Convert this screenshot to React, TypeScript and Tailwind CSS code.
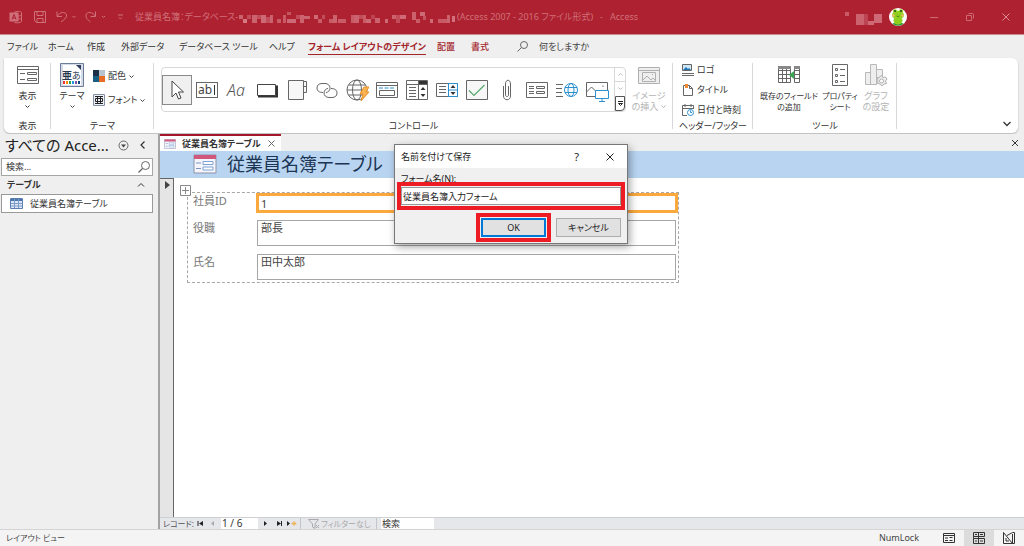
import React from 'react';

interface SvgIconProps {
  children: React.ReactNode;
  size?: string;
  viewBox?: string;
}

const SvgIcon: React.FC<SvgIconProps> = ({ children, size = 'w-6 h-6', viewBox = '0 0 24 24' }) => (
  <svg className={`${size} shrink-0`} viewBox={viewBox} fill="none" stroke="#666" strokeWidth={1} aria-hidden="true">
    {children}
  </svg>
);

const Chevron: React.FC<{ className?: string }> = ({ className = 'text-[#444]' }) => (
  <svg className={`w-[5px] h-[5px] shrink-0 ${className}`} viewBox="0 0 5 5" fill="none" stroke="currentColor" aria-hidden="true">
    <path d="M.5 1.5l2 2 2-2" />
  </svg>
);

const menuItems = [
  { label: 'ファイル', width: 'w-[41px]' },
  { label: 'ホーム', width: 'w-[39px]' },
  { label: '作成', width: 'w-[34px]' },
  { label: '外部データ', width: 'w-[58px]' },
  { label: 'データベース ツール', width: 'w-[90px]' },
  { label: 'ヘルプ', width: 'w-[39px]' },
];

// Hidden part of the file path, as [x, y, width, height, opacity]
const maskBlocks = [
  [0, 4, 4, 4, 0.45], [4, 8, 4, 4, 0.6], [8, 4, 4, 4, 0.3], [13, 4, 5, 8, 0.45], [18, 4, 4, 4, 0.3], [22, 4, 5, 8, 0.5],
  [27, 6, 4, 6, 0.3], [31, 4, 3, 8, 0.45], [38, 8, 4, 4, 0.4], [44, 4, 3, 8, 0.4], [48, 1, 4, 3, 0.35], [48, 8, 9, 4, 0.5],
  [57, 4, 4, 4, 0.3], [61, 4, 4, 8, 0.45], [65, 5, 6, 3, 0.45], [75, 4, 4, 4, 0.5], [79, 8, 4, 4, 0.4], [83, 4, 3, 4, 0.3],
  [90, 8, 4, 4, 0.4], [94, 4, 4, 8, 0.45], [99, 8, 8, 4, 0.4], [112, 4, 3, 8, 0.4], [115, 4, 5, 8, 0.45], [120, 4, 4, 4, 0.3],
  [124, 4, 3, 8, 0.4], [127, 8, 5, 4, 0.5], [132, 4, 4, 4, 0.25], [136, 7, 5, 5, 0.45], [146, 8, 3, 4, 0.5],
  [153, 4, 4, 4, 0.45], [157, 4, 4, 8, 0.3], [161, 4, 6, 4, 0.5], [173, 1, 4, 8, 0.45], [177, 8, 4, 4, 0.4],
  [181, 1, 5, 4, 0.5], [184, 5, 3, 4, 0.35], [191, 8, 3, 4, 0.5], [199, 8, 9, 4, 0.4], [208, 4, 3, 8, 0.45], [213, 5, 3, 6, 0.55],
];

const TitleBar: React.FC = () => (
  <header className="h-[35px] bg-[#ad2130] flex items-center text-[#d0707a] border-b border-[#c78d93]">
    <svg className="w-[120px] h-6 ml-2 mr-[7px] shrink-0" viewBox="8 5 120 24" fill="none" stroke="#d0707a" aria-hidden="true">
      <path d="M14 12.500c2-1.500 7-1.500 7.500 0v9c-1 1.500-5 1.500-7 1M21.500 15c-1 1-3 1-4 1M21.500 18c-1 1-2 1-3.500 1" />
      <rect x="10" y="13" width="8" height="8" fill="#d0707a" />
      <path d="M12 19.500l2-5 2 5M12.800 18h2.500" stroke="#ad2130" />
      <path d="M34.500 11.500h11v11h-9l-2-2zM37 11.500v4h6v-4M37 22.500v-4h6v4" />
      <path d="M57 11.500v5h5M57.500 16c2-4 8-5 9-1 .5 3-3 5-5.500 7" />
      <path d="M72.500 16l1.500 1.500 1.500-1.500" />
      <path d="M95.500 11.500v5h-5M95 16c-2-4-8-5-9-1-.5 3 2 5 4.500 7" />
      <path d="M102 16l1.500 1.500 1.500-1.500M118 15h5M119 17.500l1.500 1.500 1.500-1.500" />
    </svg>
    <h1 className="flex items-center text-[9px] leading-3 whitespace-nowrap">
      <span className="w-[104px]">従業員名簿：データベース-</span>
      <svg className="w-[218px] h-3 shrink-0" viewBox="0 0 218 12" aria-hidden="true">
        {maskBlocks.map(([x, y, w, h, opacity], i) => (
          <rect key={i} x={x} y={y} width={w} height={h} fill="#f0b4ba" opacity={opacity} />
        ))}
      </svg>
      <span className="whitespace-pre">(Access 2007 - 2016 ファイル形式)   -   Access</span>
    </h1>
    <svg className="w-[45px] h-5 ml-auto shrink-0" viewBox="0 0 45 20" fill="#f0b4ba" aria-hidden="true">
      <rect x="1" y="5" width="4" height="4" opacity="0.4" />
      <rect x="12" y="7" width="8" height="11" opacity="0.45" />
      <rect x="20" y="7" width="4" height="11" opacity="0.25" />
      <rect x="24" y="14" width="6" height="4" opacity="0.5" />
      <rect x="30" y="7" width="8" height="9" opacity="0.5" />
    </svg>
    <svg className="w-[18px] h-[18px] shrink-0" viewBox="0 0 18 18" aria-hidden="true">
      <circle cx="9" cy="9" r="9" fill="#fff" />
      <path d="M3 15.500c3-1 9-1 12 0a9 9 0 0 1-12 0z" fill="#2e9a3a" />
      <ellipse cx="9" cy="12.500" rx="4.500" ry="4" fill="#8fd01e" />
      <ellipse cx="9" cy="7" rx="6" ry="4.300" fill="#8fd01e" />
      <circle cx="6" cy="3.300" r="2" fill="#8fd01e" />
      <circle cx="12" cy="3.300" r="2" fill="#8fd01e" />
      <circle cx="6" cy="3" r="1" fill="#244a18" />
      <circle cx="12" cy="3" r="1" fill="#244a18" />
      <circle cx="4.500" cy="7.500" r="1.200" fill="#f5b870" />
      <circle cx="13.500" cy="7.500" r="1.200" fill="#f5b870" />
      <path d="M7.500 8q1.500 1.300 3 0" stroke="#3b7d14" strokeWidth=".8" fill="none" />
    </svg>
    <div className="flex ml-[9px] shrink-0">
      <button aria-label="最小化" className="w-9 h-6 flex items-center justify-center">
        <SvgIcon size="w-2 h-2" viewBox="0 0 8 8"><path d="M0 4.500h8" stroke="#cf6a75" /></SvgIcon>
      </button>
      <button aria-label="元に戻す" className="w-9 h-6 flex items-center justify-center">
        <SvgIcon size="w-2 h-2" viewBox="0 0 8 8"><path d="M.5 2.500h5v5h-5zM2.500 .5h4q1 0 1 1v4" stroke="#cf6a75" /></SvgIcon>
      </button>
      <button aria-label="閉じる" className="w-9 h-6 flex items-center justify-center">
        <SvgIcon size="w-2 h-2" viewBox="0 0 8 8"><path d="M.5.5l7 7m0-7l-7 7" stroke="#dc8b93" /></SvgIcon>
      </button>
    </div>
  </header>
);

const MenuBar: React.FC = () => (
  <nav className="h-[23px] bg-[#efefef] flex items-center pl-[7px] text-[9px] leading-4 text-[#333] whitespace-nowrap">
    {menuItems.map((item) => (
      <button key={item.label} className={`${item.width} text-left`}>{item.label}</button>
    ))}
    <button className="w-[129px] text-left text-[#a4262c] font-bold">
      <span className="border-b border-[#a4262c] pb-px">フォーム レイアウトのデザイン</span>
    </button>
    <button className="w-[34px] text-left text-[#a4262c] font-medium">配置</button>
    <button className="w-[46px] text-left text-[#a4262c] font-medium">書式</button>
    <label className="flex items-center gap-[11px]">
      <SvgIcon size="w-[11px] h-[11px]" viewBox="0 0 11 11"><path d="M.5 10.500l4-4" /><circle cx="7" cy="4" r="3.500" /></SvgIcon>
      <input aria-label="操作アシスト" placeholder="何をしますか" className="w-32 bg-transparent outline-none placeholder:text-[#444]" />
    </label>
  </nav>
);

interface RibbonGroupProps {
  label: string;
  width: string;
  children: React.ReactNode;
}

const RibbonGroup: React.FC<RibbonGroupProps> = ({ label, width, children }) => (
  <section className={`${width} relative shrink-0 flex flex-col`}>
    <div className="h-[61px] flex">{children}</div>
    <div className="h-3 text-center leading-3 whitespace-nowrap">{label}</div>
    <span className="absolute right-0 top-1 bottom-1 w-px bg-[#d8d8d8]" />
  </section>
);

const controls = [
  { name: '選択', icon: <path d="M7 3v16l4-4 2.500 6 2.500-1-2.500-6h5z" fill="#fff" stroke="#444" /> },
  {
    name: 'テキスト ボックス',
    icon: (
      <>
        <rect x="1.500" y="4.500" width="21" height="15" />
        <text x="3" y="16" fontSize="12" fill="#444" stroke="none">ab</text>
        <path d="M19.500 7v10" stroke="#333" />
      </>
    ),
  },
  {
    name: 'ラベル',
    icon: <text x="2" y="17.500" fontSize="16" fontStyle="italic" fontWeight="300" fill="#555" stroke="none">Aa</text>,
  },
  {
    name: 'ボタン',
    icon: (
      <>
        <path d="M2.500 6.500h18v11h-18z" stroke="#444" />
        <path d="M3 18.500h19V7.500" strokeWidth="2" stroke="#333" />
      </>
    ),
  },
  { name: 'タブ コントロール', icon: <path d="M3.500 2.500h15v19h-15zM18.500 3.500h3v5h-3M18.500 8.500h3v6h-3" fill="#f7f7f7" /> },
  {
    name: 'リンク',
    icon: <path d="M8 14.500c-3 0-6-1-6-4.500 0-3 2-4.500 5-4.500h3c3 0 5 2 5 4.500s-2 4.500-4 4.500M16 10.500c3 0 6 1 6 4.500 0 3-2 4.500-5 4.500h-3c-3 0-5-2-5-4.500s2-4.500 4-4.500" />,
  },
  {
    name: 'Web ブラウザー コントロール',
    icon: (
      <>
        <circle cx="12" cy="12" r="10" />
        <ellipse cx="12" cy="12" rx="4.500" ry="10" />
        <path d="M2 12h20M3.500 7h17M3.500 17h17" />
        <path d="M19 9h5l-3 5h3l-8 9 2-7h-3z" fill="#fbb550" stroke="#e8912d" />
      </>
    ),
  },
  {
    name: 'ナビゲーション コントロール',
    icon: (
      <>
        <path d="M1.500 4.500h21v15h-21zM1.500 7.500h21M4.500 12.500h15v5h-15z" />
        <path d="M4 10h16" stroke="#2b8fd0" strokeDasharray="4 1.500" />
      </>
    ),
  },
  {
    name: 'コンボ ボックス',
    icon: (
      <>
        <path d="M1.500 2.500h21v19h-21zM13.500 2.500v19M1.500 6.500h21M4 9.500h7M4 12.500h7M4 15.500h7M4 18.500h7" />
        <path d="M14 3h8v3h-8zM15.500 12l2.500-3 2.500 3zM15.500 16l2.500 3 2.500-3z" fill="#333" stroke="none" />
      </>
    ),
  },
  {
    name: 'リスト ボックス',
    icon: (
      <>
        <path d="M1.500 5.500h21v13h-21zM4 8.500h7M4 11.500h7M4 14.500h7" />
        <path d="M13.500 5.500h9v13h-9zM13.500 12h9" stroke="#2b8fd0" />
        <path d="M15.500 10l2.500-3 2.500 3zM15.500 14l2.500 3 2.500-3z" fill="#333" stroke="none" />
      </>
    ),
  },
  {
    name: 'チェック ボックス',
    icon: (
      <>
        <path d="M1.500 2.500h21v19h-21z" fill="#f7f7f7" />
        <path d="M4 12.500l5 5L19.500 7" stroke="#55a86b" strokeWidth="1.200" />
      </>
    ),
  },
  { name: '添付ファイル', icon: <path d="M8.500 8v10c0 5 7 5 7 0V6c0-5-5-5-5 0v11c0 2 3 2 3 0V8" /> },
  {
    name: 'オプション ボタン',
    icon: <path d="M1.500 4.500h21v15h-21zM4 8.500h5M4 10.500h5M4 13.500h5M4 15.500h5M11.500 8.500h8v2h-8zM11.500 13.500h8v2h-8z" />,
  },
  {
    name: 'ハイパーリンク',
    icon: (
      <>
        <path d="M1 6.500h7M1 10.500h6M1 14.500h6M1 18.500h7" />
        <circle cx="16" cy="12" r="6.500" stroke="#2b8fd0" />
        <ellipse cx="16" cy="12" rx="3" ry="6.500" stroke="#2b8fd0" />
        <path d="M10 9.500h12M10 14.500h12" stroke="#2b8fd0" />
      </>
    ),
  },
  {
    name: 'イメージ',
    icon: (
      <>
        <path d="M10 18.500H1.500v-14h21V12M1.500 14l5-5 6 6M18 7.500v1.500" />
        <path d="M10.500 13.500h13v8h-13zM17 21.500v3M14 24.500h6" transform="translate(0 -1)" fill="#fff" stroke="#2b8fd0" />
      </>
    ),
  },
];

interface BigButtonProps {
  icon: React.ReactNode;
  lines: string[];
  width: string;
  textSize?: string;
  disabled?: boolean;
  chevron?: 'below' | 'inline';
}

const BigButton: React.FC<BigButtonProps> = ({ icon, lines, width, textSize = 'text-[9px]', disabled, chevron }) => (
  <button
    disabled={disabled}
    className={`${width} ${textSize} flex flex-col items-center pt-1 leading-3 whitespace-nowrap disabled:text-[#b4b4b4]`}
  >
    <span className="h-6 flex items-center mb-[3px]">{icon}</span>
    {lines.map((line, i) => (
      <span key={line} className="h-[11px] flex items-center gap-[3px]">
        {line}
        {chevron === 'inline' && i === lines.length - 1 && <Chevron className="text-[#b4b4b4]" />}
      </span>
    ))}
    {chevron === 'below' && <span className="pt-[3px]"><Chevron /></span>}
  </button>
);

const Ribbon: React.FC = () => (
  <div className="bg-[#efefef] pl-1 pr-[6px] pb-px">
    <div className="h-[75px] bg-white rounded-b-md rounded-tr-md shadow-[0_1px_2px_rgba(0,0,0,0.25)] flex pt-px text-[9px] text-[#333]">
      <RibbonGroup label="表示" width="w-[47px]">
        <BigButton
          width="w-full"
          lines={['表示']}
          chevron="below"
          icon={<SvgIcon><path d="M1.500 3.500h21v17h-21zM1.500 6.500h21M4 10.500h5M4 16.500h5M11.500 9.500h9v2h-9zM11.500 15.500h9v2h-9z" /></SvgIcon>}
        />
      </RibbonGroup>
      <RibbonGroup label="テーマ" width="w-[103px]">
        <BigButton
          width="w-[42px]"
          lines={['テーマ']}
          chevron="below"
          icon={
            <SvgIcon>
              <path d="M.5.5h23v23H.5z" fill="#d5dce8" stroke="#6d7c98" />
              <path d="M3 2h13l5 5v15H3z" fill="#fff" stroke="none" />
              <path d="M16 2l5 5v-5z" fill="#2d3f5c" stroke="none" />
              <text x="2" y="15.500" fontSize="10" fontWeight="700" fill="#26374d" stroke="none">亜</text>
              <text x="12" y="15.500" fontSize="9" fill="#26374d" stroke="none">あ</text>
              <path d="M3 19.500h2" stroke="#e33" strokeWidth="3" />
              <path d="M6 19.500h2" stroke="#f80" strokeWidth="3" />
              <path d="M9 19.500h2" stroke="#2a9d4a" strokeWidth="3" />
              <path d="M12 19.500h2" stroke="#1c9be0" strokeWidth="3" />
              <path d="M15 19.500h2" stroke="#824fa6" strokeWidth="3" />
              <path d="M18 19.500h2" stroke="#147" strokeWidth="3" />
            </SvgIcon>
          }
        />
        <div className="flex flex-col pt-[5px]">
          <button className="h-6 flex items-center gap-[3px] whitespace-nowrap">
            <SvgIcon size="w-3 h-3" viewBox="0 0 12 12">
              <g stroke="none">
                <path d="M0 0h6v6H0z" fill="#1d2f45" /><path d="M6 0h6v6H6z" fill="#b8c4d0" />
                <path d="M0 6h6v6H0z" fill="#185e82" /><path d="M6 6h6v6H6z" fill="#e86c25" />
              </g>
            </SvgIcon>
            配色<Chevron />
          </button>
          <button className="h-6 flex items-center gap-[3px] whitespace-nowrap">
            <SvgIcon size="w-3 h-3" viewBox="0 0 12 12">
              <path d="M.5.500h11v11H.5z" fill="#eef0f5" stroke="#8390a8" />
              <path d="M2 2.500h8M2 9.500h8M2.500 4.500h7v3h-7zM4.500 2.500v7M7.500 2.500v7" stroke="#222" />
            </SvgIcon>
            フォント<Chevron />
          </button>
        </div>
      </RibbonGroup>
      <RibbonGroup label="コントロール" width="w-[519px]">
        <div className="flex mt-2 ml-[7px] h-[45px] shrink-0 border border-[#d8d8d8] rounded-sm">
          <div className="flex items-center pr-[2px]">
            {controls.map((control, i) => (
              <button
                key={control.name}
                aria-label={control.name}
                className={`w-[30px] h-[30px] flex items-center justify-center ${i === 0 ? 'bg-[#f0f0f0] border border-[#8a8a8a]' : ''}`}
              >
                <SvgIcon>{control.icon}</SvgIcon>
              </button>
            ))}
          </div>
          <div className="w-[11px] flex flex-col border-l border-[#d8d8d8]">
            <button aria-label="上へ" className="flex-1 flex items-center justify-center border-b border-[#d8d8d8]"><Chevron className="rotate-180 text-[#bbb]" /></button>
            <button aria-label="下へ" className="flex-1 flex items-center justify-center"><Chevron className="text-[#bbb]" /></button>
            <button aria-label="その他" className="flex-1 flex items-center justify-center border border-[#555] rounded-br-sm">
              <SvgIcon size="w-[7px] h-[7px]" viewBox="0 0 7 7"><path d="M1 1.500h5M1.500 3.500h4l-2 2z" stroke="#222" /></SvgIcon>
            </button>
          </div>
        </div>
        <BigButton
          disabled
          width="w-[46px]"
          lines={['イメージ', 'の挿入']}
          chevron="inline"
          icon={<SvgIcon><path d="M1.500 4.500h21v16h-21zM1.500 7.500h21M5.500 9.500h13v9h-13zM6 17l4-4 4 4 2-2 3 3M15 11.500h1" stroke="#b0b0b0" fill="#eee" /></SvgIcon>}
        />
      </RibbonGroup>
      <RibbonGroup label="ヘッダー/フッター" width="w-20">
        <div className="flex flex-col justify-between pl-[9px] pt-[3px] pb-[2px]">
          <button className="h-4 flex items-center gap-[3px] whitespace-nowrap">
            <SvgIcon size="w-3 h-3" viewBox="0 0 12 12">
              <path d="M.5.500h9v6h-9z" fill="#cfe6f7" /><path d="M1 6l3-3 2 2 1-1 2 2z" fill="#1d73b4" stroke="none" />
              <path d="M0 9.500h12M0 11.500h12" />
            </SvgIcon>
            ロゴ
          </button>
          <button className="h-4 flex items-center gap-[3px] whitespace-nowrap">
            <SvgIcon size="w-3 h-3" viewBox="0 0 12 12">
              <path d="M1.500 1.500h6l3 3v7h-9zM7.500 1.500v3h3" /><path d="M3 0h3v4H3z" fill="#ee8a31" stroke="none" />
            </SvgIcon>
            タイトル
          </button>
          <button className="h-4 flex items-center gap-[3px] whitespace-nowrap">
            <SvgIcon size="w-3 h-3" viewBox="0 0 12 12">
              <path d="M5 11.500H.5v-10h11V5M.5 4.500h11M3 0v3M9 0v3" /><circle cx="8.500" cy="8.500" r="3" stroke="#2b8fd0" /><path d="M8.500 6.500v2h1.500" stroke="#2b8fd0" />
            </SvgIcon>
            日付と時刻
          </button>
        </div>
      </RibbonGroup>
      <RibbonGroup label="ツール" width="w-36">
        <BigButton
          width="w-[72px]"
          textSize="text-[8px]"
          lines={['既存のフィールド', 'の追加']}
          icon={
            <SvgIcon>
              <path d="M1.500 3.500h12v16h-12zM1.500 7.500h12M1.500 11.500h12M1.500 15.500h12M5.500 3.500v16M9.500 3.500v16M17.500 3.500h5v16h-5zM17.500 7.500h5M17.500 11.500h5M17.500 15.500h5" />
              <path d="M1 3h13v3H1zM17 3h6v3h-6z" fill="#888" stroke="none" />
              <path d="M12 12l5-4v8z" fill="#3aa757" stroke="none" />
            </SvgIcon>
          }
        />
        <BigButton
          width="w-[30px]"
          textSize="text-[8px]"
          lines={['プロパティ', 'シート']}
          icon={<SvgIcon><path d="M4.500 1.500h15v21h-15zM7.500 5.500h2v2h-2zM7.500 11.500h2v2h-2zM7.500 17.500h2v2h-2zM12 6.500h5M12 12.500h5M12 18.500h5" /></SvgIcon>}
        />
        <BigButton
          disabled
          width="w-[42px]"
          lines={['グラフ', 'の設定']}
          icon={
            <SvgIcon>
              <path d="M1.500 9.500h5v12h-5zM6.500 1.500h6v20h-6zM12.500 6.500h6v8h-6z" stroke="#b8b8b8" fill="#eee" />
              <path d="M17.500 12.500l1.500 2 2.500-.5 1.500 2-1.500 2 1 2.500-2.500.5-2 2-2-2-2.500-.5.5-2.500-1-2 2-1.500z" stroke="#b0b0b0" fill="#eee" />
              <circle cx="17.500" cy="18" r="2" stroke="#b0b0b0" fill="#fff" />
            </SvgIcon>
          }
        />
      </RibbonGroup>
      <div className="flex-1 flex justify-end items-end pr-[7px] pb-[5px]">
        <button aria-label="リボンを折りたたむ">
          <SvgIcon size="w-2 h-2" viewBox="0 0 8 8"><path d="M.5 2l3.500 3.500L7.500 2" stroke="#333" strokeWidth="1.300" /></SvgIcon>
        </button>
      </div>
    </div>
  </div>
);

const NavigationPane: React.FC = () => (
  <aside className="w-40 shrink-0 bg-[#efefef] border-r-2 border-[#a2a2a2] pl-px pr-[5px] text-[#333]">
    <div className="h-6 flex items-center pl-1 pb-[2px] whitespace-nowrap">
      <h2 className="w-[113px] text-[15px] leading-6 text-[#222]">すべての Acce...</h2>
      <button aria-label="カテゴリの選択">
        <SvgIcon size="w-[11px] h-[11px]" viewBox="0 0 11 11"><circle cx="5.500" cy="5.500" r="4.500" /><path d="M3 4.500h5l-2.500 3z" fill="#444" stroke="none" /></SvgIcon>
      </button>
      <button aria-label="ペインを閉じる" className="ml-[10px]">
        <SvgIcon size="w-2 h-2" viewBox="0 0 8 8"><path d="M5.500.5L2 4l3.500 3.500" stroke="#333" strokeWidth="1.200" /></SvgIcon>
      </button>
    </div>
    <label className="h-[18px] flex items-center bg-white border border-[#a6a6a6] pl-1 pr-px">
      <input aria-label="検索" placeholder="検索..." className="min-w-0 flex-1 text-[9px] outline-none placeholder:text-[#333]" />
      <SvgIcon size="w-[14px] h-[14px]" viewBox="0 0 14 14"><path d="M1.500 12.500l4-4" strokeWidth="1.300" /><circle cx="8.500" cy="5.500" r="4" /></SvgIcon>
    </label>
    <button className="w-full h-[18px] flex items-center justify-between pl-[6px] pr-2 text-[9px] font-bold">
      テーブル
      <SvgIcon size="w-2 h-2" viewBox="0 0 8 8"><path d="M1 5.500l3-3 3 3" stroke="#333" /></SvgIcon>
    </button>
    <button className="w-full h-[19px] flex items-center gap-[7px] pl-2 bg-white border border-[#999] text-[9px] whitespace-nowrap">
      <SvgIcon size="w-[13px] h-[11px]" viewBox="0 0 13 11">
        <path d="M.5.500h12v10H.5z" fill="#dbe7f6" stroke="#5c7fb0" />
        <path d="M1 1h11v2H1z" fill="#4a74ad" stroke="none" />
        <path d="M4.500 1v9M8.500 1v9M1 5.500h11M1 8h11" stroke="#7d9cc6" />
      </SvgIcon>
      従業員名簿テーブル
    </button>
  </aside>
);

const FormIcon: React.FC<{ size: string }> = ({ size }) => (
  <svg className={`${size} shrink-0`} viewBox="0 0 24 20" fill="none" aria-hidden="true">
    <path d="M1 1h22v18H1z" fill="#f4f6fb" stroke="#8d92a8" />
    <path d="M1 1h22v4H1z" fill="#d0587c" />
    <path d="M3 9h5M3 14.500h5" stroke="#7c93c4" />
    <path d="M10 7.500h10v3H10zM10 13h10v3H10z" fill="#fff" stroke="#7ea1d6" />
  </svg>
);

const fields = [
  { id: 'emp-id', label: '社員ID', value: '1', rowStyle: 'h-[27px]', inputStyle: 'h-5 -ml-px -mr-px w-[422px] border-3 border-[#fba83c] px-[2px]' },
  { id: 'role', label: '役職', value: '部長', rowStyle: 'h-[34px]', inputStyle: 'h-[26px] w-[419px] border border-[#a6a6a6] px-[3px] pb-3' },
  { id: 'name', label: '氏名', value: '田中太郎', rowStyle: 'h-[26px]', inputStyle: 'h-[26px] w-[419px] border border-[#a6a6a6] px-[3px] pb-3' },
];

const RecordBar: React.FC = () => (
  <div className="h-3 flex items-center bg-[#e6e7eb] border-t border-[#cfd0d4] pl-[3px] text-[9px] leading-[11px] text-[#333] whitespace-nowrap">
    <span className="w-[34px] text-[8px] text-[#555]">レコード:</span>
    <button aria-label="先頭のレコード" className="w-3"><SvgIcon size="w-[7px] h-[7px]" viewBox="0 0 7 7"><path d="M1 1v5" stroke="#222" /><path d="M6 1v5L2 3.500z" fill="#222" stroke="none" /></SvgIcon></button>
    <button aria-label="前のレコード" className="w-3"><SvgIcon size="w-[7px] h-[7px]" viewBox="0 0 7 7"><path d="M5 1v5L2 3.500z" fill="#aaa" stroke="none" /></SvgIcon></button>
    <input aria-label="現在のレコード" defaultValue="1 / 6" className="w-[37px] h-[11px] bg-white pl-px mr-[5px] outline-none text-[10px]" />
    <button aria-label="次のレコード" className="w-[13px]"><SvgIcon size="w-[7px] h-[7px]" viewBox="0 0 7 7"><path d="M1 1v5l3-2.500z" fill="#222" stroke="none" /></SvgIcon></button>
    <button aria-label="最後のレコード" className="w-[10px]"><SvgIcon size="w-[7px] h-[7px]" viewBox="0 0 7 7"><path d="M1 1v5l4-2.500z" fill="#222" stroke="none" /><path d="M5.500 1v5" stroke="#222" /></SvgIcon></button>
    <button aria-label="新しいレコード" className="w-[14px]"><SvgIcon size="w-[11px] h-[7px]" viewBox="0 0 11 7"><path d="M1 1v5l3-2.500z" fill="#222" stroke="none" /><path d="M8 1v5M5.500 3.500h5M6.500 2l3 3m0-3l-3 3" stroke="#f0b45a" /></SvgIcon></button>
    <button disabled className="w-[77px] h-[11px] flex items-center pl-[7px] gap-px border-x border-[#c4c5c9] text-[8px] text-[#a8a8a8]">
      <SvgIcon size="w-3 h-[10px]" viewBox="0 0 12 10"><path d="M.5.500h10L7 5v4.500L4.500 8V5zM8 6l3 3m0-3l-3 3" stroke="#aaa" /></SvgIcon>
      フィルターなし
    </button>
    <input aria-label="レコードの検索" defaultValue="検索" className="w-[53px] h-[11px] bg-white ml-1 pl-px outline-none" />
  </div>
);

const DocumentArea: React.FC = () => (
  <main className="flex-1 min-w-0 flex flex-col bg-white">
    <div className="h-[17px] bg-[#efefef] flex items-center justify-between pr-[5px]">
      <div className="w-[121px] h-full bg-white border-t-2 border-[#a4182a] flex items-center pl-1 pr-[6px] text-[9px] font-bold text-[#333] whitespace-nowrap">
        <FormIcon size="w-3 h-[10px]" />
        <span className="ml-[6px] flex-1">従業員名簿テーブル</span>
        <button aria-label="タブを閉じる"><SvgIcon size="w-[7px] h-[7px]" viewBox="0 0 7 7"><path d="M.5.5l6 6m0-6l-6 6" /></SvgIcon></button>
      </div>
      <button aria-label="閉じる"><SvgIcon size="w-2 h-2" viewBox="0 0 8 8"><path d="M1 1l6 6m0-6l-6 6" stroke="#333" /></SvgIcon></button>
    </div>
    <div className="h-[27px] bg-[#b8d4f1] flex items-center gap-[10px] pl-[33px] pb-px">
      <FormIcon size="w-6 h-5" />
      <h2 className="text-[18px] leading-6 text-[#1c3554]">従業員名簿テーブル</h2>
    </div>
    <div className="flex-1 flex">
      <div className="w-[14px] shrink-0 bg-[#e5e5e5] border-t border-r border-[#666] pl-[5px] pt-[2px]">
        <SvgIcon size="w-[5px] h-[8px]" viewBox="0 0 5 8"><path d="M0 0v8l5-4z" fill="#444" stroke="none" /></SvgIcon>
      </div>
      <div className="pl-[13px] pt-[14px]">
        <div className="relative w-[492px] border border-dashed border-[#a8a8a8] pl-[5px] pb-[2px] text-[11px] leading-4 text-[#777]">
          <span className="absolute -left-2 -top-2 w-[11px] h-[11px] bg-white">
            <SvgIcon size="w-[11px] h-[11px]" viewBox="0 0 11 11"><path d="M.5.500h10v10H.5zM5.500 2v7M2 5.500h7" stroke="#888" /></SvgIcon>
          </span>
          {fields.map((field) => (
            <div key={field.id} className={`${field.rowStyle} flex items-start whitespace-nowrap`}>
              <label htmlFor={field.id} className="w-16">{field.label}</label>
              <input id={field.id} defaultValue={field.value} className={`${field.inputStyle} bg-white text-[#444] outline-none`} />
            </div>
          ))}
        </div>
      </div>
    </div>
    <RecordBar />
  </main>
);

const StatusBar: React.FC = () => (
  <footer className="h-[17px] bg-[#f4f4f4] border-t border-[#d4d4d4] flex items-center pl-[6px] text-[#444]">
    <span className="text-[8px]">レイアウト ビュー</span>
    <span className="ml-auto mr-[15px] text-[9px]">NumLock</span>
    <button aria-label="フォーム ビュー" className="w-[30px] h-4 flex items-center justify-center">
      <SvgIcon size="w-3 h-3" viewBox="0 0 12 12"><path d="M.5 1.500h11v9H.5zM.5 3.500h11M2 6h3M2 8.500h3M6.500 5.500h3M6.500 8.500h3" stroke="#333" /></SvgIcon>
    </button>
    <button aria-label="レイアウト ビュー" className="w-[30px] h-4 flex items-center justify-center bg-[#dcdcdc]">
      <SvgIcon size="w-3 h-3" viewBox="0 0 12 12"><path d="M.5.500h11v4H.5zM5.500.5v11M.5 6.500h11v5H.5zM.5 4.500v2M7 2.500h3M7 9h3M2 2.500h2M2 9h2" stroke="#333" /></SvgIcon>
    </button>
    <button aria-label="デザイン ビュー" className="w-[30px] h-4 flex items-center justify-center">
      <SvgIcon size="w-3 h-3" viewBox="0 0 12 12"><path d="M.5.500v11h9zM3 6v3h3M4 3.500L9.500.5h2v11h-2V2" stroke="#333" /></SvgIcon>
    </button>
  </footer>
);

const SaveAsDialog: React.FC = () => (
  <div
    role="dialog"
    aria-labelledby="dialog-title"
    className="absolute left-[394px] top-[144px] w-[234px] h-[100px] flex flex-col bg-[#f0f0f0] border border-[#777] shadow-[2px_3px_8px_rgba(0,0,0,0.35)] text-[9px] leading-3 text-[#222]"
  >
    <div className="h-[23px] bg-white flex items-center pl-[6px] pr-[13px]">
      <h3 id="dialog-title" className="flex-1">名前を付けて保存</h3>
      <button aria-label="ヘルプ" className="mr-[27px] text-[11px]">?</button>
      <button aria-label="閉じる"><SvgIcon size="w-2 h-2" viewBox="0 0 8 8"><path d="M.5.5l7 7m0-7l-7 7" stroke="#222" /></SvgIcon></button>
    </div>
    <div className="px-[6px] pt-[5px]">
      <label htmlFor="form-name" className="block h-[14px]">フォーム名(N):</label>
      <div className="relative">
        <input id="form-name" defaultValue="従業員名簿入力フォーム" className="block w-full h-[18px] bg-white border border-[#999] pl-px outline-none" />
        <span className="absolute -inset-x-1 -inset-y-[5px] border-4 border-[#ed1c24] pointer-events-none" />
      </div>
      <div className="mt-[13px] flex justify-end gap-[10px]">
        <div className="relative">
          <button className="block w-[65px] h-[19px] bg-[#e1e1e1] border-2 border-[#0078d7]">OK</button>
          <span className="absolute -inset-[5px] border-4 border-[#ed1c24] pointer-events-none" />
        </div>
        <button className="w-[65px] h-[19px] bg-[#e1e1e1] border border-[#adadad]">キャンセル</button>
      </div>
    </div>
  </div>
);

const App: React.FC = () => (
  <div className="relative min-h-screen flex flex-col overflow-hidden font-['Noto_Sans','Noto_Sans_CJK_JP',sans-serif] [font-feature-settings:'palt']">
    <TitleBar />
    <MenuBar />
    <Ribbon />
    <div className="flex-1 flex">
      <NavigationPane />
      <DocumentArea />
    </div>
    <StatusBar />
    <SaveAsDialog />
  </div>
);

export default App;
